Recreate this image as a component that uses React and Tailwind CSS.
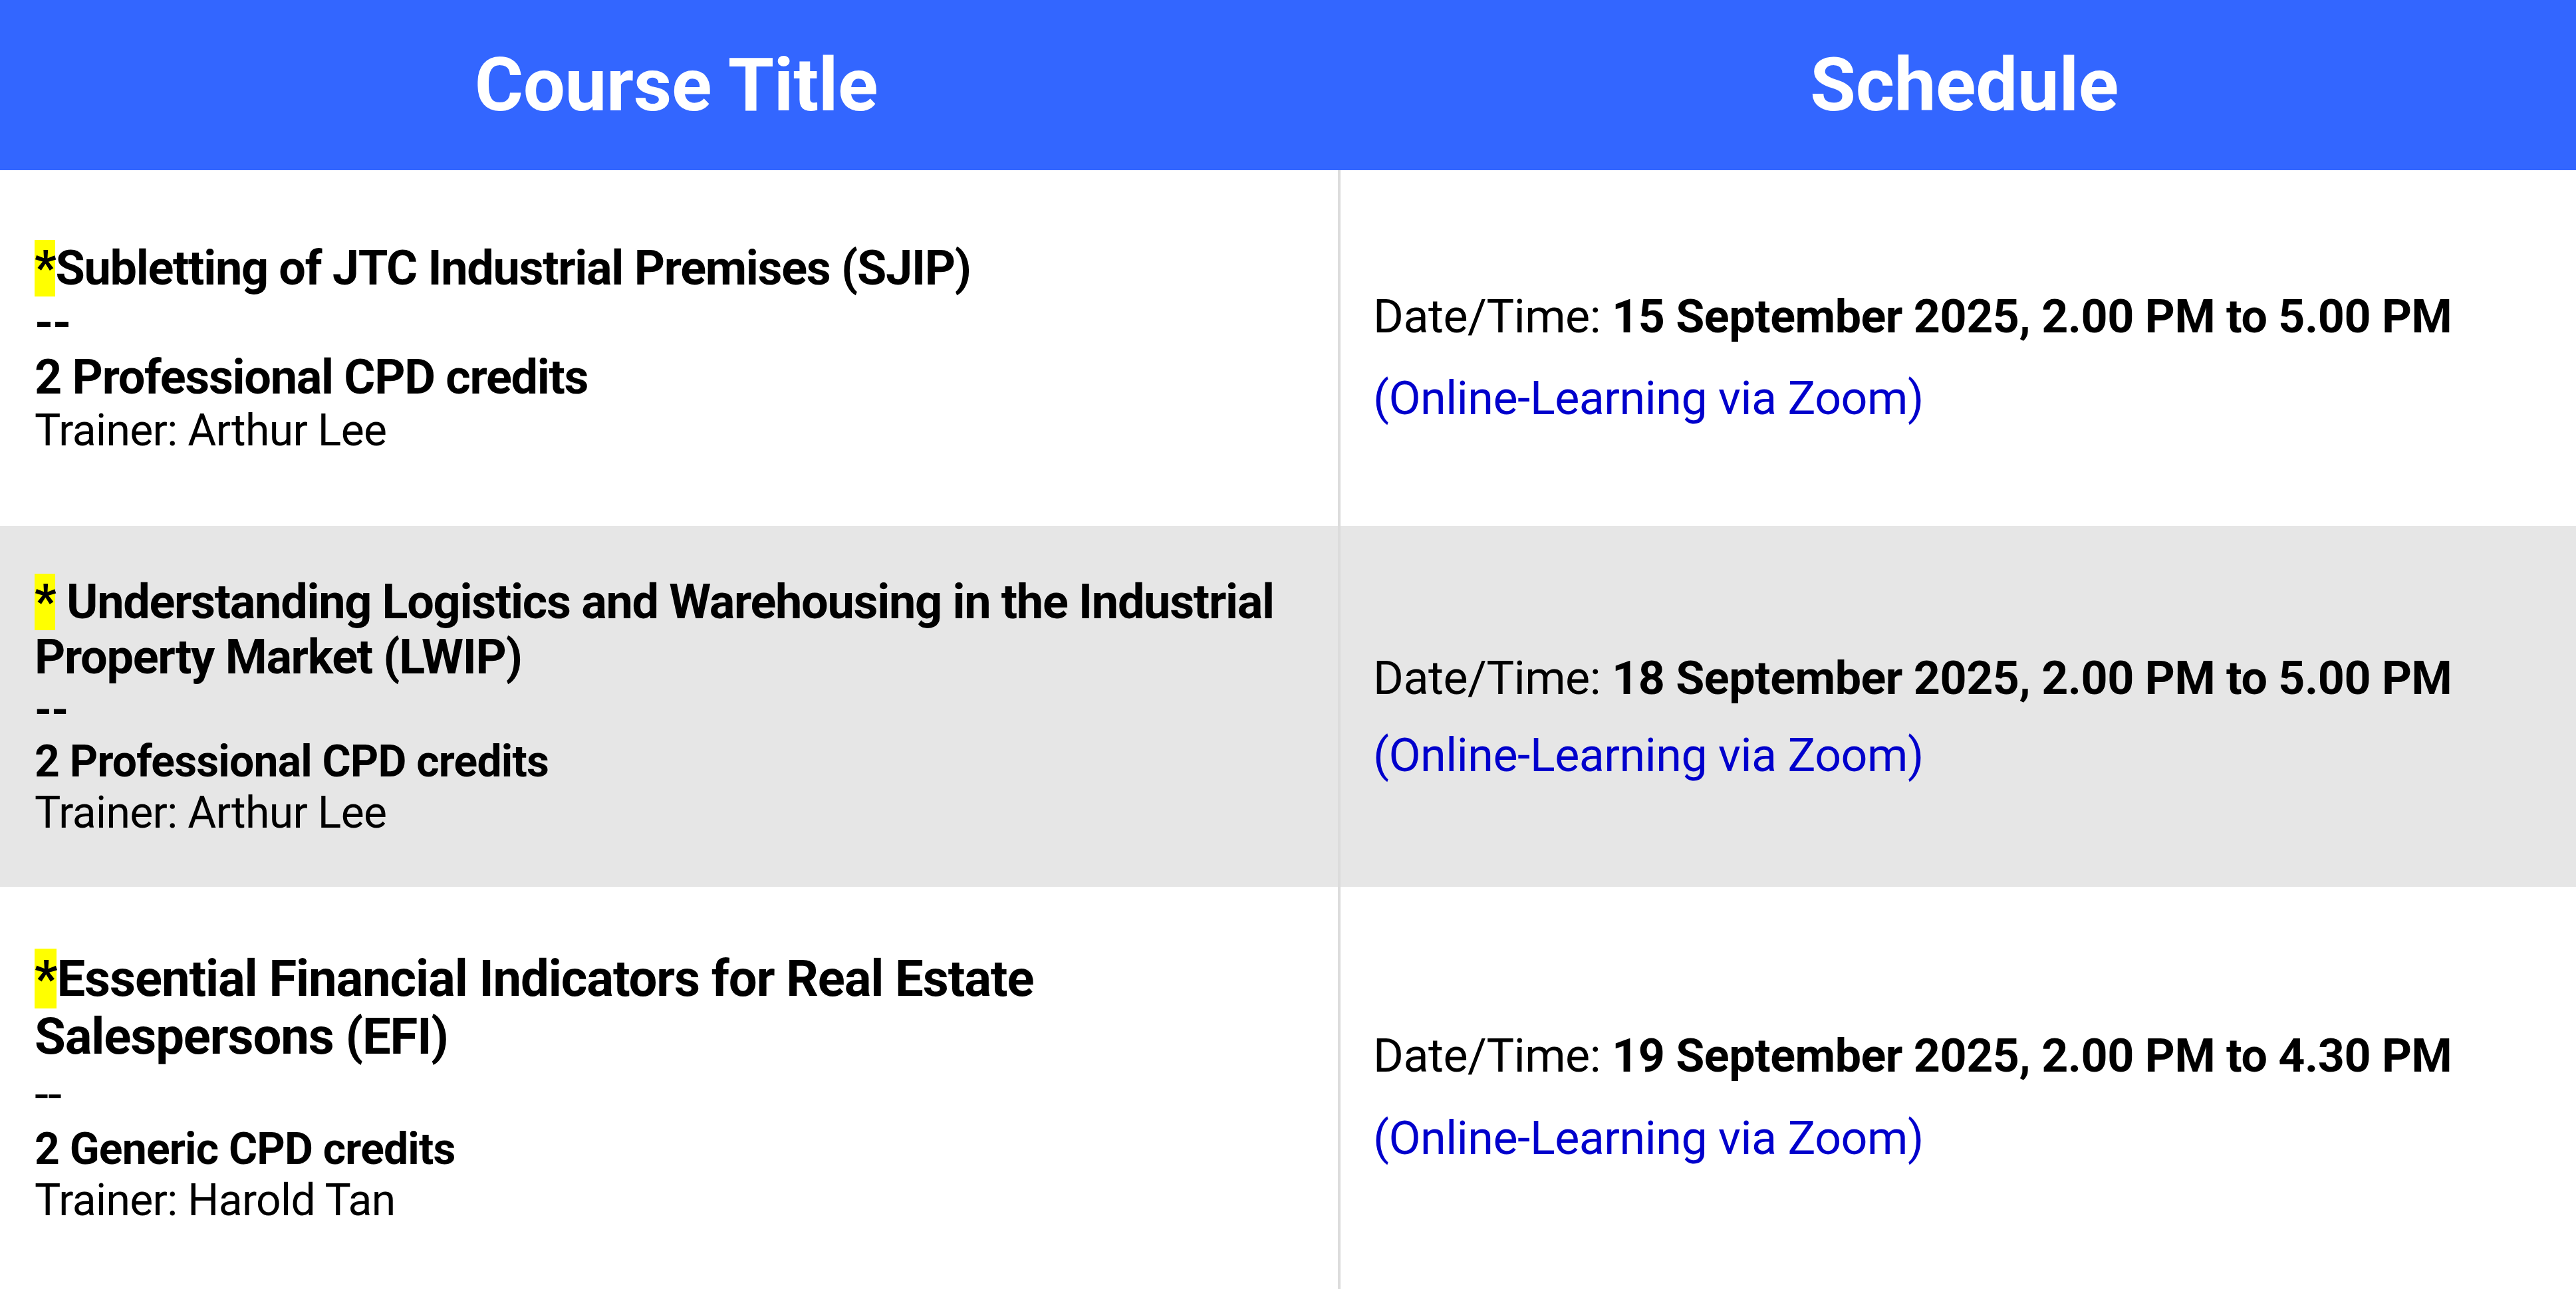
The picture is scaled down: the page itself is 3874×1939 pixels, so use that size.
import React from "react";

const courses = [
  {
    star: "*",
    title: "Subletting of JTC Industrial Premises (SJIP)",
    titleClass: "text-[72px] leading-[83px] font-bold tracking-[-1.3px]",
    dashClass: "text-[72px] leading-[82px] font-bold tracking-[-1.3px]",
    credits: "2 Professional CPD credits",
    creditsClass: "text-[72px] leading-[82px] font-bold tracking-[-1.3px]",
    trainer: "Trainer: Arthur Lee",
    date: "15 September 2025, 2.00 PM to 5.00 PM",
    rowClass: "h-[535px] bg-white",
    scheduleClass: "pt-[28px] gap-[41px]",
  },
  {
    star: "*",
    title: " Understanding Logistics and Warehousing in the Industrial Property Market (LWIP)",
    titleClass: "text-[72px] leading-[83px] font-bold tracking-[-1.3px]",
    dashClass: "text-[66px] leading-[77px] font-bold tracking-[-0.8px]",
    credits: "2 Professional CPD credits",
    creditsClass: "text-[66px] leading-[77px] font-bold tracking-[-0.8px]",
    trainer: "Trainer: Arthur Lee",
    date: "18 September 2025, 2.00 PM to 5.00 PM",
    rowClass: "h-[543px] bg-[#e6e6e6]",
    scheduleClass: "pt-[31px] gap-[34px]",
  },
  {
    star: "*",
    title: "Essential Financial Indicators for Real Estate Salespersons (EFI)",
    titleClass: "text-[76px] leading-[87px] font-bold tracking-[-1.1px]",
    dashClass: "text-[76px] leading-[87px] font-normal tracking-[-1.1px]",
    credits: "2 Generic CPD credits",
    creditsClass: "text-[66px] leading-[77px] font-bold tracking-[-0.8px]",
    trainer: "Trainer: Harold Tan",
    date: "19 September 2025, 2.00 PM to 4.30 PM",
    rowClass: "h-[605px] bg-white",
    scheduleClass: "pt-[27px] gap-[42px]",
  },
];

const CourseRow = ({ course }) => (
  <div className={`flex ${course.rowClass}`}>
    {/* course title cell */}
    <div className="w-[2016px] shrink-0 border-r-4 border-[#dcdcdc] flex flex-col justify-center px-[52px] text-black">
      <p className={course.titleClass}>
        <span className="bg-[#ffff00]">{course.star}</span>
        {course.title}
      </p>
      <p className={course.dashClass}>--</p>
      <p className={course.creditsClass}>{course.credits}</p>
      <p className="text-[66px] leading-[77px] tracking-[-0.65px]">
        {course.trainer}
      </p>
    </div>
    {/* schedule cell */}
    <div
      className={`flex-1 flex flex-col justify-center pl-[49px] pr-[40px] tracking-[-0.5px] ${course.scheduleClass}`}
    >
      <p className="text-[70px] leading-[82px] text-black whitespace-nowrap">
        Date/Time: <span className="font-bold">{course.date}</span>
      </p>
      <p className="text-[70px] leading-[82px] text-[#0000cc]">
        (Online-Learning via Zoom)
      </p>
    </div>
  </div>
);

export default function App() {
  return (
    <div className="w-[3874px] h-[1939px] overflow-hidden bg-white font-['Roboto','Liberation_Sans',sans-serif]">
      <div className="flex h-[256px] bg-[#3366ff] text-white font-bold text-[112px] tracking-[-0.3px]">
        <div className="w-[2016px] shrink-0 flex items-center justify-center pl-[18px]">
          Course Title
        </div>
        <div className="flex-1 flex items-center justify-center pl-[18px]">
          Schedule
        </div>
      </div>
      {courses.map((course, index) => (
        <CourseRow key={index} course={course} />
      ))}
    </div>
  );
}
